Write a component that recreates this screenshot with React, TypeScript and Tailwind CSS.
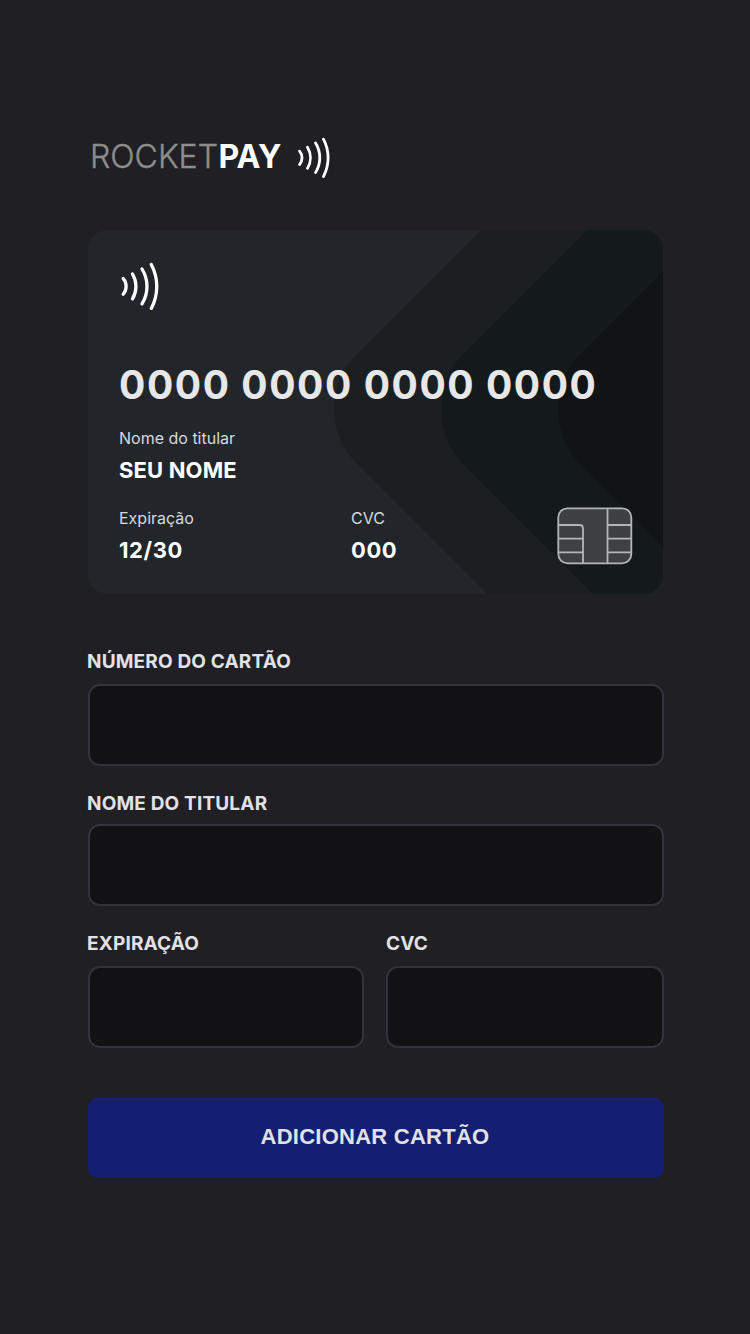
import React from "react";

function Contactless({ className }: { className: string }) {
  return (
    <svg
      className={className}
      viewBox="0 0 40 48"
      fill="none"
      stroke="white"
      strokeWidth="3.3"
      strokeLinecap="round"
      strokeLinejoin="round"
    >
      <path d="M4.200 16.500A12.200 12.200 0 0 1 4.200 32.300" />
      <path d="M13.500 12A24 24 0 0 1 13.500 36.800" />
      <path d="M23 7A33 33 0 0 1 23 41.800" />
      <path d="M32.300 2.400A47 47 0 0 1 32.300 46.400" />
    </svg>
  );
}

function CardArt() {
  return (
    <svg className="absolute inset-0 -z-10" width="575" height="364" viewBox="0 0 575 364" fill="none">
      <path d="M393 0L268.500 124.500A77 77 0 0 0 268.500 233.500L399 364H575V0Z" fill="#1b1f22" />
      <path d="M499 0L376.500 122.500A80 80 0 0 0 376.500 235.500L505 364H575V0Z" fill="#14191b" />
      <path d="M575 41L493.500 122.500A80 80 0 0 0 493.500 235.500L575 317Z" fill="#121315" />
    </svg>
  );
}

function Chip() {
  return (
    <svg className="h-[58px] w-[76px]" viewBox="0 0 76 58" fill="none" stroke="#b4b5b6" strokeWidth="1.8">
      <rect x="1.300" y="1.300" width="73" height="55" rx="9" fill="#3e4142" />
      <path d="M1.300 18H22.300Q26 18 26 21.500V56.300M1.300 31.700H26M1.300 45.300H26" />
      <path d="M50.500 1.300V56.300M50.500 18H74.300M50.500 31.700H74.300M50.500 45.300H74.300" />
    </svg>
  );
}

function Detail({ label, value, valueClass }: { label: string; value: string; valueClass: string }) {
  return (
    <div className="flex flex-col">
      <span className="text-[16px] leading-8 text-[#d9d9da]">{label}</span>
      <span className={`text-[22px] leading-8 font-bold text-white ${valueClass}`}>{value}</span>
    </div>
  );
}

function Field({ label, className, labelClass }: { label: string; className?: string; labelClass: string }) {
  return (
    <label className={className}>
      <span className={`block text-[19px] leading-6 font-bold tracking-[0.17px] text-[#e1e1e6] ${labelClass}`}>
        {label}
      </span>
      <input className="block h-[82px] w-full rounded-xl border-2 border-[#323238] bg-[#121214] px-4 text-lg text-white outline-none" />
    </label>
  );
}

export default function App() {
  return (
    <main className="flex min-h-screen flex-col bg-[#202024] pl-[88px] font-['Inter',sans-serif]">
      <header className="mt-[136px] flex h-11 items-center">
        <h1 className="mb-[3px] ml-[2px] text-[32px] leading-10 font-light text-[#8d8d8d] [-webkit-text-stroke:0.4px_#8d8d8d]">
          ROCKET<strong className="ml-[0.5px] font-bold text-white [-webkit-text-stroke:0px]">PAY</strong>
        </h1>
        <Contactless className="mb-px ml-[15px] h-[41px] w-[34px]" />
      </header>

      <section className="relative isolate mt-[50px] flex h-[364px] w-[575px] flex-col overflow-hidden rounded-[20px] bg-[#22262a] pl-[31px]">
        <CardArt />
        <Contactless className="mt-8 h-12 w-10" />
        <p className="mt-[51px] text-[39px] leading-12 font-bold tracking-[1.58px] text-[#e7e7e7]">
          0000 0000 0000 0000
        </p>
        <div className="mt-[13px]">
          <Detail label="Nome do titular" value="SEU NOME" valueClass="tracking-[0.15px]" />
        </div>
        <div className="mt-4 flex">
          <div className="w-[232px]">
            <Detail label="Expiração" value="12/30" valueClass="tracking-[0.6px]" />
          </div>
          <div className="w-[206px]">
            <Detail label="CVC" value="000" valueClass="tracking-[0.6px]" />
          </div>
          <div className="mt-[5px]">
            <Chip />
          </div>
        </div>
      </section>

      <form className="flex w-[576px] flex-col" onSubmit={(e) => e.preventDefault()}>
        <Field className="mt-14" labelClass="-ml-px mb-2.5" label="NÚMERO DO CARTÃO" />
        <Field className="mt-[26px]" labelClass="-ml-px mb-2" label="NOME DO TITULAR" />
        <div className="mt-[26px] flex gap-[22px]">
          <Field className="w-[276px]" labelClass="-ml-px mb-2.5" label="EXPIRAÇÃO" />
          <Field className="w-[278px]" labelClass="mb-2.5" label="CVC" />
        </div>
        <button className="mt-[50px] h-20 rounded-[10px] bg-[#141f73] pr-0.5 pb-1 font-['Liberation_Sans',sans-serif] text-[22px] font-bold tracking-[0.25px] text-[#e1e1e6]">
          ADICIONAR CARTÃO
        </button>
      </form>
    </main>
  );
}
